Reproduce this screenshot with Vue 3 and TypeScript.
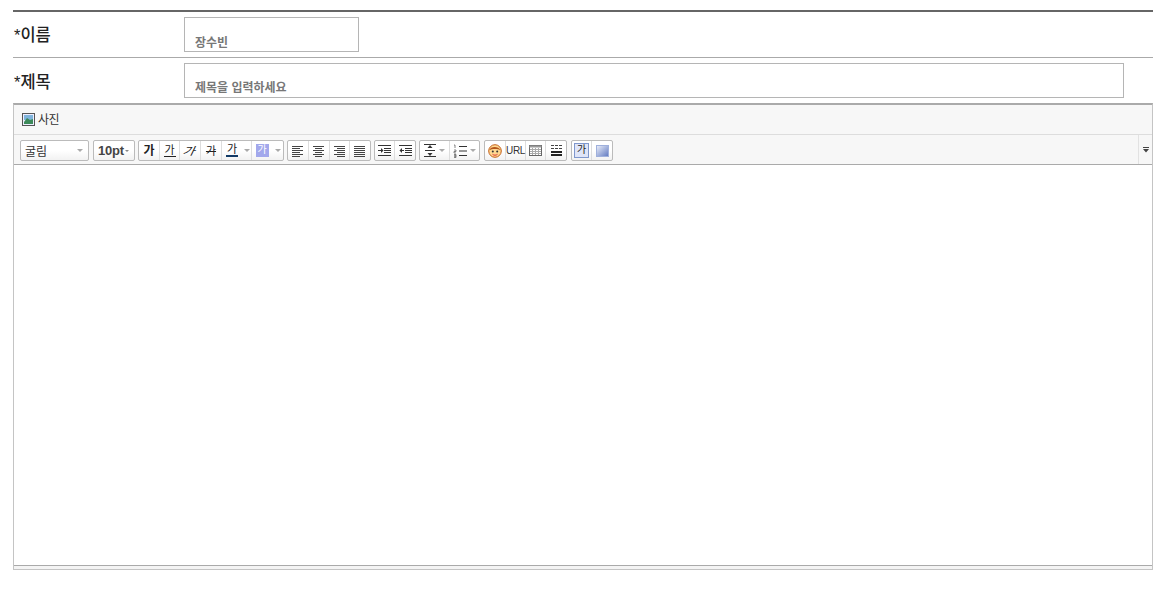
<script setup lang="ts">
type Btn = { k: string; w: number; t?: string };
const groups: Btn[][] = [
  [{k:'bold',w:21,t:'가'},{k:'under',w:20,t:'가'},{k:'italic',w:21,t:'가'},{k:'strike',w:21,t:'가'},{k:'color',w:20,t:'가'},{k:'drop',w:10},{k:'bg',w:20,t:'가'},{k:'drop',w:11}],
  [{k:'al',w:21},{k:'ac',w:21},{k:'ar',w:20},{k:'aj',w:20}],
  [{k:'in',w:20},{k:'out',w:20}],
  [{k:'lh',w:30},{k:'ol',w:29}],
  [{k:'face',w:21},{k:'url',w:20,t:'URL'},{k:'table',w:20},{k:'hr',w:20}],
  [{k:'code',w:20,t:'가'},{k:'grad',w:20}],
];
const lines: Record<string, [number, number][]> = {
  al: [[1,11],[1,8],[1,11],[1,8],[1,11],[1,8]],
  ac: [[1,11],[3,7],[1,11],[3,7],[1,11],[3,7]],
  ar: [[1,11],[4,8],[1,11],[4,8],[1,11],[4,8]],
  aj: [[1,11],[1,11],[1,11],[1,11],[1,11],[1,11]],
};
</script>

<template>
  <main class="page">
    <section class="form">
      <div class="row">
        <label class="label" for="name">*이름</label>
        <input id="name" class="field short" value="장수빈" />
      </div>
      <div class="row">
        <label class="label" for="title">*제목</label>
        <input id="title" class="field long" placeholder="제목을 입력하세요" />
      </div>
    </section>
    <section class="editor">
      <div class="attach">
        <svg class="photo" width="13" height="13" viewBox="0 0 13 13">
          <rect x=".5" y=".5" width="12" height="12" fill="#eef" stroke="#555"/>
          <rect x="2" y="2" width="9" height="5" fill="#7fb4dc"/>
          <path d="M2 9 5 5l3 2 3-1v5H2z" fill="#3d8a5a"/>
        </svg>
        <span class="attach-label">사진</span>
      </div>
      <div class="tools">
        <div class="select font"><span>굴림</span><i class="tri"></i></div>
        <div class="select size"><b>10pt</b><i class="tri small"></i></div>
        <div v-for="(g, gi) in groups" :key="gi" class="group">
          <div v-for="(b, bi) in g" :key="bi" class="btn" :class="b.k" :style="{ width: b.w + 'px' }">
            <template v-if="b.t"><span class="glyph">{{ b.t }}</span></template>
            <i v-else-if="b.k === 'drop'" class="tri"></i>
            <svg v-else-if="lines[b.k]" width="12" height="12" viewBox="0 0 12 12">
              <rect v-for="(l, i) in lines[b.k]" :key="i" :x="l[0] - 1" :y="i * 2 + 1" :width="l[1]" height="1" fill="#444"/>
            </svg>
            <svg v-else-if="b.k === 'in' || b.k === 'out'" width="13" height="12" viewBox="0 0 13 12">
              <path d="M0 .5h13M6 3.500h7M6 5.500h7M6 7.500h7M0 10.500h13" stroke="#333" fill="none"/>
              <path v-if="b.k === 'in'" d="M0 5.500h3" stroke="#333" fill="none"/>
              <path v-if="b.k === 'in'" d="M3 3l2.500 2.500L3 8z" fill="#333"/>
              <path v-if="b.k === 'out'" d="M2 5.500h3" stroke="#333" fill="none"/>
              <path v-if="b.k === 'out'" d="M3 3 .5 5.500 3 8z" fill="#333"/>
            </svg>
            <template v-else-if="b.k === 'lh'">
              <svg width="12" height="13" viewBox="0 0 12 13">
                <path d="M0 .5h12M0 12.500h12M1 6.500h10" stroke="#333" fill="none"/>
                <path d="M6 1 3.500 4h5zM6 12 3.500 9h5z" fill="#333"/>
              </svg>
              <i class="tri tool"></i>
            </template>
            <template v-else-if="b.k === 'ol'">
              <svg width="14" height="14" viewBox="0 0 14 14">
                <path d="M6 2.500h8M6 7h8M6 11.500h8" stroke="#333" fill="none"/>
                <path d="M1 1h1v3M1 6h2v1.500H1V9h2M1 10.500h2V12H1h2v1.500H1" stroke="#555" stroke-width=".7" fill="none"/>
              </svg>
              <i class="tri tool"></i>
            </template>
            <svg v-else-if="b.k === 'face'" width="14" height="14" viewBox="0 0 14 14">
              <circle cx="7" cy="7" r="6.300" fill="#ffd890" stroke="#c2601c"/>
              <path d="M1.500 6c1-4 9-4 11 0-2-1.500-9-1.500-11 0z" fill="#b4541a"/>
              <circle cx="4.800" cy="7.500" r="1" fill="#333"/><circle cx="9.200" cy="7.500" r="1" fill="#333"/>
              <path d="M4.500 10.300c1.500 1.200 3.500 1.200 5 0" stroke="#d33" fill="none"/>
            </svg>
            <svg v-else-if="b.k === 'table'" width="13" height="11" viewBox="0 0 13 11">
              <rect x=".5" y=".5" width="12" height="10" fill="#fff" stroke="#666"/>
              <path d="M1 4.500h11M1 6.500h11M1 8.500h11M3.500 3v7M6.500 3v7M9.500 3v7" stroke="#aaa" fill="none"/>
              <path d="M.5 .5h12v2H.5z" fill="#999"/>
            </svg>
            <svg v-else-if="b.k === 'hr'" width="11" height="11" viewBox="0 0 11 11">
              <path d="M0 .5h3M4 .5h3M8 .5h3M0 3.500h3M4 3.500h3M8 3.500h3" stroke="#444" fill="none"/>
              <rect y="6" width="11" height="2" fill="#222"/><rect y="9" width="11" height="2" fill="#222"/>
            </svg>
            <svg v-else-if="b.k === 'grad'" width="13" height="12" viewBox="0 0 13 12">
              <defs><linearGradient id="gr" x1="0" y1="0" x2="1" y2="1"><stop offset="0" stop-color="#eef1fb"/><stop offset="1" stop-color="#5f78c0"/></linearGradient></defs>
              <rect x=".5" y=".5" width="12" height="11" fill="url(#gr)" stroke="#9fb0dc"/>
            </svg>
          </div>
        </div>
        <div class="more">
          <svg width="6" height="6" viewBox="0 0 6 6"><path d="M0 0h6v1H0zM0 2h6L3 5.500z" fill="#444"/></svg>
        </div>
      </div>
      <div class="body"></div>
      <div class="foot"></div>
    </section>
  </main>
</template>

<style>
html, body { margin: 0; background: #fff; }
</style>

<style scoped>
.page {
  padding: 10px 21px 0 13px;
  font-family: "Liberation Sans", "Noto Sans CJK KR", sans-serif;
  color: #333;
}
.form { border-top: 2px solid #666; }
.row {
  display: flex;
  align-items: center;
  height: 45px;
  border-bottom: 1px solid #aaa;
}
.row + .row { border-bottom: 0; }
.label { box-sizing: border-box; width: 171px; padding: 0 0 1px 1px; font-size: 16.500px; font-weight: 500; color: #222; }
.row + .row .label { padding: 1px 0 0 1px; }
.field {
  box-sizing: border-box;
  height: 35px;
  border: 1px solid #b5b5b5;
  padding: 13px 10px 0;
  font: bold 12px "Liberation Sans", "Noto Sans CJK KR", sans-serif;
  color: #777;
  background: #fff;
  outline: 0;
}
.field::placeholder { color: #777; opacity: 1; }
.short { width: 175px; }
.long { width: 940px; padding-top: 15px; }

.editor {
  box-sizing: border-box;
  border: 1px solid #c4c4c4;
  border-top: 2px solid #aaa;
  border-bottom: 0;
  height: 467px;
  display: flex;
  flex-direction: column;
}
.attach {
  box-sizing: border-box;
  height: 30px;
  flex: none;
  display: flex;
  align-items: center;
  gap: 3px;
  padding-left: 8px;
  background: #f7f7f7;
  border-bottom: 1px solid #ddd;
  font-size: 12px;
  letter-spacing: -.5px;
}
.attach-label { padding-bottom: 2px; }
.tools {
  box-sizing: border-box;
  height: 30px;
  flex: none;
  display: flex;
  align-items: center;
  gap: 3px;
  padding: 2px 0 0 6px;
  background: #f7f7f7;
  border-bottom: 1px solid #aaa;
  position: relative;
}
.select, .group {
  box-sizing: border-box;
  height: 21px;
  border: 1px solid #bbb;
  border-radius: 2px;
  background: linear-gradient(#fff 50%, #f2f2f2);
}
.select { display: flex; align-items: center; justify-content: space-between; }
.font { width: 69px; padding: 0 5px 0 4px; font-size: 12px; margin-right: 1px; }
.size { width: 42px; padding: 0 5px 0 4px; font-size: 13px; color: #444; }
.size b { font-weight: bold; letter-spacing: -.2px; }
.tri {
  display: block;
  width: 0; height: 0;
  border: 3px solid transparent;
  border-bottom: 0;
  border-top: 3px solid #aaa;
}
.tri.small { border-width: 2px 2px 0; border-top-color: #888; }
.tool { margin-left: 3px; }
.group { display: flex; flex: none; }
.group:nth-of-type(n+7) { margin-left: 1px; }
.btn {
  display: flex;
  flex: none;
  align-items: center;
  justify-content: center;
  height: 19px;
  box-sizing: border-box;
  border-right: 1px solid #ddd;
}
.btn:last-child { border-right: 0; }
.btn.color, .btn.bg { border-right: 0; }
.glyph { display: block; font-size: 11px; line-height: 12px; color: #222; }
.bold .glyph { font-weight: bold; font-size: 12px; }
.under .glyph { border-bottom: 1px solid #222; width: 12px; text-align: center; }
.italic .glyph { transform: skewX(-25deg) scaleX(1.200); }
.strike .glyph { text-decoration: line-through; }
.color .glyph { border-bottom: 2px solid #123a66; line-height: 11px; width: 12px; text-align: center; }
.bg .glyph { background: #a2a8ec; color: #fff; width: 13px; height: 13px; text-align: center; font-size: 10px; }
.url .glyph { font-size: 10px; letter-spacing: -.4px; color: #333; }
.code .glyph {
  box-sizing: border-box;
  width: 15px;
  height: 15px;
  border: 1px solid #7f97cc;
  background: #dfe5f8;
  text-align: center;
  font-size: 10px;
}
.more {
  position: absolute;
  right: 0; top: 0; bottom: 0;
  width: 13px;
  border-left: 1px solid #e2e2e2;
  display: flex;
  align-items: center;
  justify-content: center;
}
.body { flex: 1; background: #fff; }
.foot {
  box-sizing: border-box;
  height: 5px;
  flex: none;
  background: #f4f4f4;
  border-top: 1px solid #aaa;
  border-bottom: 1px solid #c4c4c4;
}
</style>
